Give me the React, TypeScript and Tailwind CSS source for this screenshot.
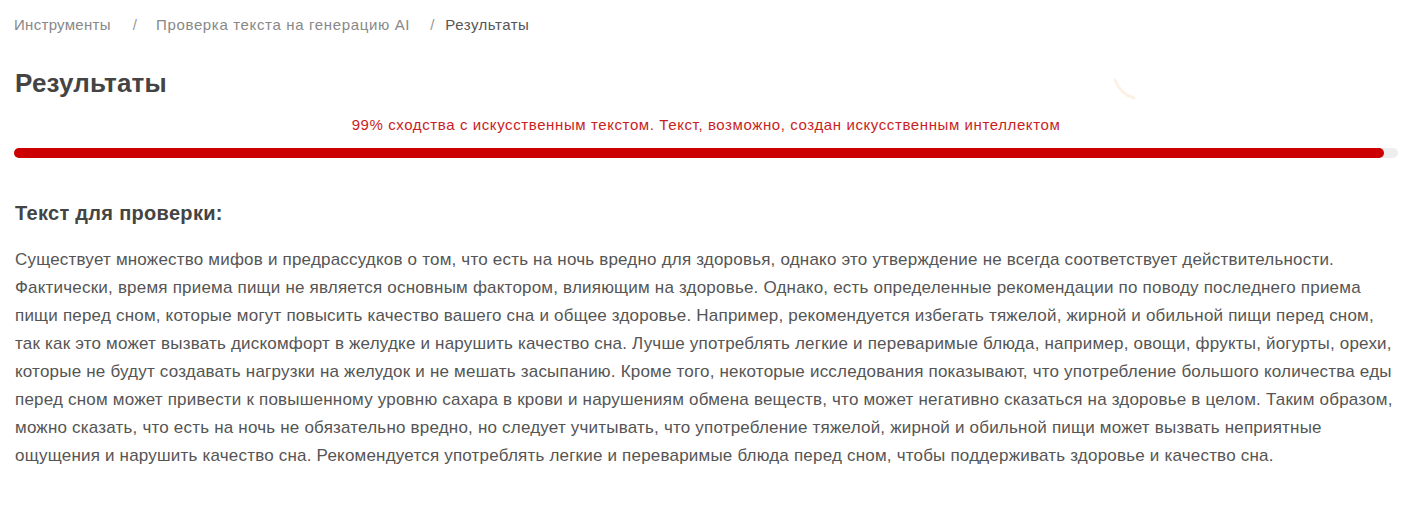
import React from 'react';

const checkedText =
  'Существует множество мифов и предрассудков о том, что есть на ночь вредно для здоровья, однако это утверждение не всегда соответствует действительности. Фактически, время приема пищи не является основным фактором, влияющим на здоровье. Однако, есть определенные рекомендации по поводу последнего приема пищи перед сном, которые могут повысить качество вашего сна и общее здоровье. Например, рекомендуется избегать тяжелой, жирной и обильной пищи перед сном, так как это может вызвать дискомфорт в желудке и нарушить качество сна. Лучше употреблять легкие и переваримые блюда, например, овощи, фрукты, йогурты, орехи, которые не будут создавать нагрузки на желудок и не мешать засыпанию. Кроме того, некоторые исследования показывают, что употребление большого количества еды перед сном может привести к повышенному уровню сахара в крови и нарушениям обмена веществ, что может негативно сказаться на здоровье в целом. Таким образом, можно сказать, что есть на ночь не обязательно вредно, но следует учитывать, что употребление тяжелой, жирной и обильной пищи может вызвать неприятные ощущения и нарушить качество сна. Рекомендуется употреблять легкие и переваримые блюда перед сном, чтобы поддерживать здоровье и качество сна.';

export default function App() {
  const score = 99;

  return (
    <div className="relative min-h-[520px] bg-white pl-[14px] pr-[22px] pt-[15px] font-['Liberation_Sans',Arial,sans-serif]">
      {/* Breadcrumbs */}
      <nav className="flex items-center text-[15px] leading-5 text-[#888]">
        <span className="tracking-[0.3px]">Инструменты</span>
        <span className="ml-[22px] mr-[19px] text-[#999]">/</span>
        <span className="tracking-[0.65px]">Проверка текста на генерацию AI</span>
        <span className="ml-[20px] mr-[11px] text-[#999]">/</span>
        <span className="tracking-[0.5px] text-[#555]">Результаты</span>
      </nav>

      <h1 className="mt-[33px] pl-[1px] text-[26px] font-bold leading-[30px] tracking-[0.2px] text-[#444]">Результаты</h1>

      {/* faint spinner remnant */}
      <svg className="absolute left-[1112px] top-[78px]" width="26" height="22" viewBox="0 0 26 22" fill="none">
        <path d="M3 2 C6 10 12 17 22 20" stroke="#fdf1e6" strokeWidth="3" strokeLinecap="round" />
      </svg>

      {/* Score */}
      <p className="mt-[17px] text-center text-[15px] leading-5 tracking-[0.6px] text-[#c81e1e]">
        {score}% сходства с искусственным текстом. Текст, возможно, создан искусственным интеллектом
      </p>
      <div className="mt-[13px] h-[10px] w-full rounded-full bg-[#eeeeee]">
        <div className="h-full rounded-full bg-[#cc0000]" style={{ width: `${score}%` }} />
      </div>

      <h2 className="mt-[43px] pl-[1px] text-[20px] font-bold leading-6 tracking-[0.3px] text-[#444]">Текст для проверки:</h2>
      <p className="mt-[21px] pl-[1px] text-[17px] leading-[28px] tracking-[0.2px] text-[#555]">{checkedText}</p>
    </div>
  );
}
